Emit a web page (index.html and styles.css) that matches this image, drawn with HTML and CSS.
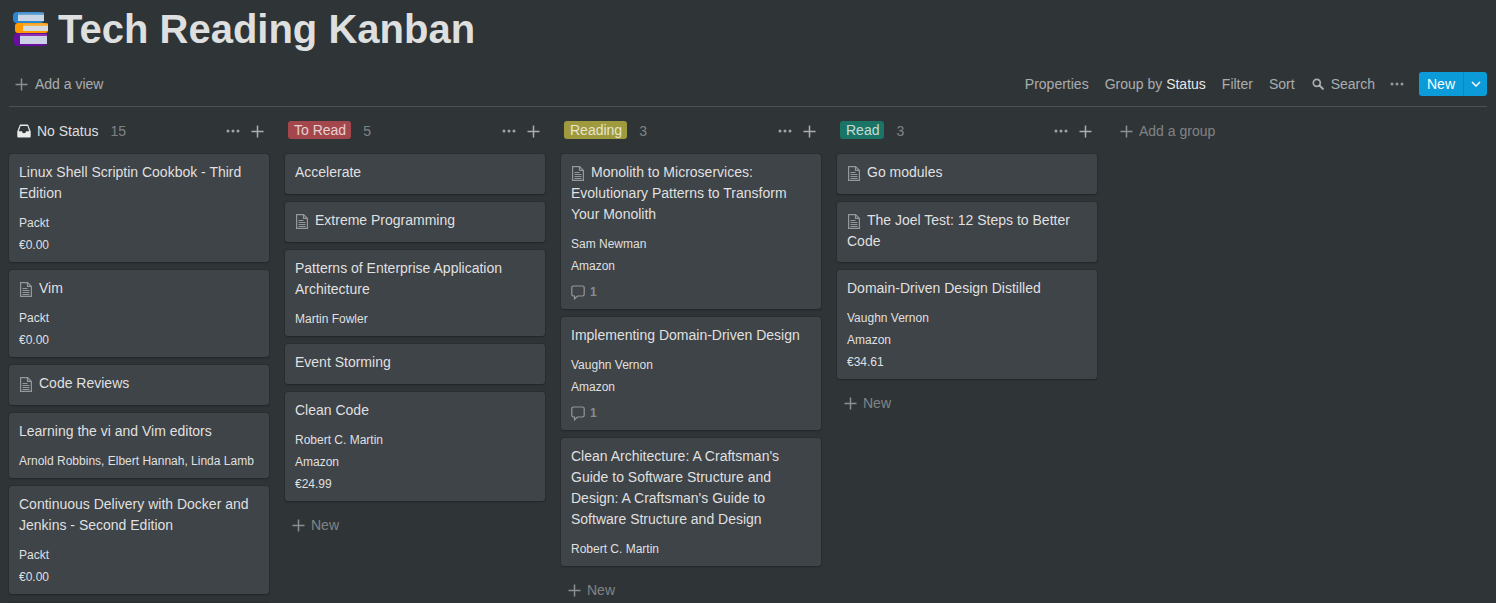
FILE: index.html
```html
<!DOCTYPE html>
<html>

<head>
	<title>Tech Reading Kanban</title>
	<meta name="viewport" content="width=device-width, initial-scale=1.0">
	<link rel="stylesheet" href="styles.css">
</head>

<body>
	<!-- shared icons -->
	<svg class="icon-defs" aria-hidden="true">
		<symbol id="i-plus" viewBox="0 0 13 13">
			<path d="M6.5 0.5v12M0.5 6.5h12" fill="none" stroke="currentColor" stroke-width="1.5"/>
		</symbol>
		<symbol id="i-dots" viewBox="0 0 14 4">
			<circle cx="2" cy="2" r="1.5" fill="currentColor"/>
			<circle cx="7" cy="2" r="1.5" fill="currentColor"/>
			<circle cx="12" cy="2" r="1.5" fill="currentColor"/>
		</symbol>
		<symbol id="i-doc" viewBox="0 0 12 15">
			<path d="M0.6 0.6h7l3.800 3.800v10h-10.800z M7.500 0.600v3.800h3.800" fill="none" stroke="currentColor" stroke-width="1.200"/>
			<path d="M2.500 6.500h5M2.500 8.500h7M2.500 10.500h7M2.500 12.500h7" fill="none" stroke="currentColor"/>
		</symbol>
		<symbol id="i-comment" viewBox="0 0 14 15">
			<path d="M2.5 1h9a1.7 1.7 0 0 1 1.7 1.7v6.6a1.7 1.7 0 0 1-1.7 1.7h-5l-3 2.8v-2.8h-1a1.7 1.7 0 0 1-1.7-1.7v-6.6a1.7 1.7 0 0 1 1.7-1.7z" fill="none" stroke="currentColor" stroke-width="1.2"/>
		</symbol>
	</svg>

	<div class="title-row">
		<svg class="page-icon" viewBox="0 0 36 36" aria-hidden="true">
			<rect x="0" y="1" width="31" height="11" rx="4" fill="#2a86d0"/>
			<rect x="5" y="3.500" width="26" height="6.500" fill="#c9d6e4"/>
			<rect x="5" y="1.500" width="26" height="2" fill="#5b9bd5"/>
			<rect x="2" y="12" width="33" height="10" rx="3" fill="#ff9a00"/>
			<rect x="10" y="14.500" width="25" height="5.500" fill="#d5dbe0"/>
			<rect x="10" y="12.500" width="25" height="2" fill="#f7ab30"/>
			<rect x="1" y="22" width="33" height="13" rx="4" fill="#6a0ea0"/>
			<rect x="7" y="25" width="27" height="8" fill="#ccd2e6"/>
			<rect x="7" y="23" width="27" height="2" fill="#8e2fb5"/>
		</svg>
		<h1 class="page-title">Tech Reading Kanban</h1>
	</div>

	<div class="toolbar">
		<div class="add-view">
			<svg class="icon-plus"><use href="#i-plus"/></svg>
			<span>Add a view</span>
		</div>
		<div class="toolbar-right">
			<span>Properties</span>
			<span>Group by <span class="group-value">Status</span></span>
			<span>Filter</span>
			<span>Sort</span>
			<span class="search">
				<svg class="icon-search" viewBox="0 0 12 12"><circle cx="4.8" cy="4.8" r="3.5" fill="none" stroke="currentColor" stroke-width="1.7"/><path d="M7.5 7.5l4 4" stroke="currentColor" stroke-width="2"/></svg>
				Search
			</span>
			<svg class="icon-dots toolbar-dots"><use href="#i-dots"/></svg>
			<div class="new-btn">
				<span class="new-label">New</span>
				<span class="new-arrow">
					<svg class="icon-chevron" viewBox="0 0 10 6"><path d="M1 1l4 4 4-4" fill="none" stroke="currentColor" stroke-width="1.5"/></svg>
				</span>
			</div>
		</div>
	</div>

	<div class="board">

		<!-- no status -->
		<div class="column">
			<div class="col-head">
				<svg class="icon-inbox" viewBox="0 0 14 14"><path d="M3 0.5h8l2.7 7v5a1 1 0 0 1-1 1h-11.400a1 1 0 0 1-1-1v-5z" fill="#fff" fill-opacity=".9"/><path d="M3.600 2h6.800l1.800 5.300h-3.200a2 2 0 0 1-4 0h-3.200z" fill="#2f3437"/></svg>
				<span class="plain-label">No Status</span>
				<span class="count">15</span>
				<svg class="icon-dots col-dots"><use href="#i-dots"/></svg>
				<svg class="icon-plus col-plus"><use href="#i-plus"/></svg>
			</div>
			<div class="card">
				<div class="card-title">Linux Shell Scriptin Cookbok - Third Edition</div>
				<div class="props"><div class="prop">Packt</div><div class="prop">€0.00</div></div>
			</div>
			<div class="card">
				<div class="card-title"><svg class="icon-doc"><use href="#i-doc"/></svg>Vim</div>
				<div class="props"><div class="prop">Packt</div><div class="prop">€0.00</div></div>
			</div>
			<div class="card">
				<div class="card-title"><svg class="icon-doc"><use href="#i-doc"/></svg>Code Reviews</div>
			</div>
			<div class="card">
				<div class="card-title">Learning the vi and Vim editors</div>
				<div class="props"><div class="prop">Arnold Robbins, Elbert Hannah, Linda Lamb</div></div>
			</div>
			<div class="card">
				<div class="card-title">Continuous Delivery with Docker and Jenkins - Second Edition</div>
				<div class="props"><div class="prop">Packt</div><div class="prop">€0.00</div></div>
			</div>
			<div class="card"></div>
		</div>

		<!-- to read -->
		<div class="column">
			<div class="col-head">
				<span class="tag tag-red">To Read</span>
				<span class="count">5</span>
				<svg class="icon-dots col-dots"><use href="#i-dots"/></svg>
				<svg class="icon-plus col-plus"><use href="#i-plus"/></svg>
			</div>
			<div class="card">
				<div class="card-title">Accelerate</div>
			</div>
			<div class="card">
				<div class="card-title"><svg class="icon-doc"><use href="#i-doc"/></svg>Extreme Programming</div>
			</div>
			<div class="card">
				<div class="card-title">Patterns of Enterprise Application Architecture</div>
				<div class="props"><div class="prop">Martin Fowler</div></div>
			</div>
			<div class="card">
				<div class="card-title">Event Storming</div>
			</div>
			<div class="card">
				<div class="card-title">Clean Code</div>
				<div class="props"><div class="prop">Robert C. Martin</div><div class="prop">Amazon</div><div class="prop">€24.99</div></div>
			</div>
			<div class="col-new"><svg class="icon-plus"><use href="#i-plus"/></svg>New</div>
		</div>

		<!-- reading -->
		<div class="column">
			<div class="col-head">
				<span class="tag tag-yellow">Reading</span>
				<span class="count">3</span>
				<svg class="icon-dots col-dots"><use href="#i-dots"/></svg>
				<svg class="icon-plus col-plus"><use href="#i-plus"/></svg>
			</div>
			<div class="card">
				<div class="card-title"><svg class="icon-doc"><use href="#i-doc"/></svg>Monolith to Microservices: Evolutionary Patterns to Transform Your Monolith</div>
				<div class="props"><div class="prop">Sam Newman</div><div class="prop">Amazon</div></div>
				<div class="comments"><svg class="icon-comment"><use href="#i-comment"/></svg>1</div>
			</div>
			<div class="card">
				<div class="card-title">Implementing Domain-Driven Design</div>
				<div class="props"><div class="prop">Vaughn Vernon</div><div class="prop">Amazon</div></div>
				<div class="comments"><svg class="icon-comment"><use href="#i-comment"/></svg>1</div>
			</div>
			<div class="card">
				<div class="card-title">Clean Architecture: A Craftsman's Guide to Software Structure and Design: A Craftsman's Guide to Software Structure and Design</div>
				<div class="props"><div class="prop">Robert C. Martin</div></div>
			</div>
			<div class="col-new"><svg class="icon-plus"><use href="#i-plus"/></svg>New</div>
		</div>

		<!-- read -->
		<div class="column">
			<div class="col-head">
				<span class="tag tag-green">Read</span>
				<span class="count">3</span>
				<svg class="icon-dots col-dots"><use href="#i-dots"/></svg>
				<svg class="icon-plus col-plus"><use href="#i-plus"/></svg>
			</div>
			<div class="card">
				<div class="card-title"><svg class="icon-doc"><use href="#i-doc"/></svg>Go modules</div>
			</div>
			<div class="card">
				<div class="card-title card-title-short"><svg class="icon-doc"><use href="#i-doc"/></svg>The Joel Test: 12 Steps to Better Code</div>
			</div>
			<div class="card">
				<div class="card-title">Domain-Driven Design Distilled</div>
				<div class="props"><div class="prop">Vaughn Vernon</div><div class="prop">Amazon</div><div class="prop">€34.61</div></div>
			</div>
			<div class="col-new"><svg class="icon-plus"><use href="#i-plus"/></svg>New</div>
		</div>

		<div class="add-group"><svg class="icon-plus"><use href="#i-plus"/></svg>Add a group</div>
	</div>
</body>

</html>
```

FILE: styles.css
```css
html, body {
    margin: 0;
    height: 603px;
    overflow: hidden;
}

body {
    background: #2f3437;
    color: rgba(255, 255, 255, 0.85);
    font-family: "Liberation Sans", Arial, sans-serif;
    font-size: 14px;
}

.icon-defs {
    display: none;
}

/* title */

.title-row {
    display: flex;
    align-items: center;
    height: 62px;
    padding-left: 13px;
    box-sizing: border-box;
    padding-bottom: 4px;
}

.page-icon {
    width: 36px;
    height: 36px;
    flex: none;
    margin-right: 9px;
}

.page-title {
    margin: 0;
    font-size: 40px;
    line-height: 48px;
    font-weight: 700;
}

/* toolbar */

.toolbar {
    display: flex;
    align-items: center;
    justify-content: space-between;
    height: 44px;
    margin: 0 9px;
    border-bottom: 1px solid rgba(255, 255, 255, 0.14);
    box-sizing: content-box;
    color: rgba(255, 255, 255, 0.6);
}

.add-view {
    display: flex;
    align-items: center;
    padding-left: 6px;
    gap: 7px;
}

.toolbar-right {
    display: flex;
    align-items: center;
    gap: 16px;
}

.group-value {
    color: rgba(255, 255, 255, 0.9);
}

.search {
    display: flex;
    align-items: center;
    gap: 7px;
    margin-left: 1px;
}

.icon-plus {
    width: 13px;
    height: 13px;
    flex: none;
    color: rgba(255, 255, 255, 0.45);
}

.icon-dots {
    width: 14px;
    height: 4px;
    flex: none;
    color: rgba(255, 255, 255, 0.5);
}

/* one px tighter than the other toolbar items */
.toolbar-dots {
    margin: 0 -1px;
}

.icon-search {
    width: 12px;
    height: 12px;
}

/* new button */

.new-btn {
    display: flex;
    height: 24px;
    border-radius: 3px;
    background: #0a9bd8;
    color: #fff;
    line-height: 24px;
    overflow: hidden;
}

.new-label {
    width: 44px;
    text-align: center;
}

.new-arrow {
    display: flex;
    align-items: center;
    justify-content: center;
    width: 23px;
    border-left: 1px solid rgba(0, 0, 0, 0.12);
}

.icon-chevron {
    width: 10px;
    height: 6px;
}

/* board */

.board {
    display: flex;
    align-items: flex-start;
    gap: 16px;
    padding: 8px 0 0 9px;
}

.column {
    width: 260px;
    flex: none;
}

.col-head {
    display: flex;
    align-items: center;
    height: 32px;
    margin-bottom: 7px;
    padding: 0 5px 0 3px;
}

.plain-label {
    margin-left: 6px;
}

.icon-inbox {
    width: 14px;
    height: 14px;
    margin-left: 5px;
}

.count {
    margin-left: 12px;
    color: rgba(255, 255, 255, 0.4);
}

.col-dots {
    margin-left: auto;
    color: rgba(255, 255, 255, 0.55);
}

.col-plus {
    margin-left: 11px;
    color: rgba(255, 255, 255, 0.6);
}

.tag {
    height: 18px;
    line-height: 18px;
    margin-bottom: 2px; /* sits a px above the centre of the head */
    padding: 0 5px 0 6px;
    border-radius: 3px;
    font-size: 14px;
    color: rgba(255, 255, 255, 0.75);
}

.tag-red {
    background: #a4474c;
}

.tag-yellow {
    background: #a09a3f;
}

.tag-green {
    background: #1a7566;
}

/* cards */

.card {
    margin-bottom: 8px;
    border-radius: 3px;
    background: #3f4448;
    box-shadow: 0 1px 2px rgba(15, 15, 15, 0.3), 0 0 0 1px rgba(15, 15, 15, 0.1);
    overflow: hidden;
}

.card-title {
    padding: 8px 10px 11px;
    line-height: 21px;
}

.card-title-short {
    padding-bottom: 10px;
}

.icon-doc {
    display: inline-block;
    width: 12px;
    height: 15px;
    margin: 0 7px 0 1px;
    vertical-align: -4px;
    color: rgba(255, 255, 255, 0.45);
}

.props {
    margin-top: -3px;
    padding: 0 10px 6px;
}

.prop {
    font-size: 12px;
    line-height: 22px;
    white-space: nowrap;
}

.comments {
    display: flex;
    align-items: center;
    gap: 5px;
    height: 22px;
    margin-top: -2px;
    padding: 0 10px 6px;
    font-size: 12px;
    font-weight: 700;
    color: rgba(255, 255, 255, 0.4);
}

.icon-comment {
    width: 14px;
    height: 15px;
    color: rgba(255, 255, 255, 0.45);
}

.col-new {
    display: flex;
    align-items: center;
    gap: 6px;
    height: 32px;
    padding-left: 7px;
    color: rgba(255, 255, 255, 0.4);
}

.add-group {
    display: flex;
    align-items: center;
    gap: 6px;
    height: 32px;
    padding-left: 7px;
    color: rgba(255, 255, 255, 0.4);
}
```
